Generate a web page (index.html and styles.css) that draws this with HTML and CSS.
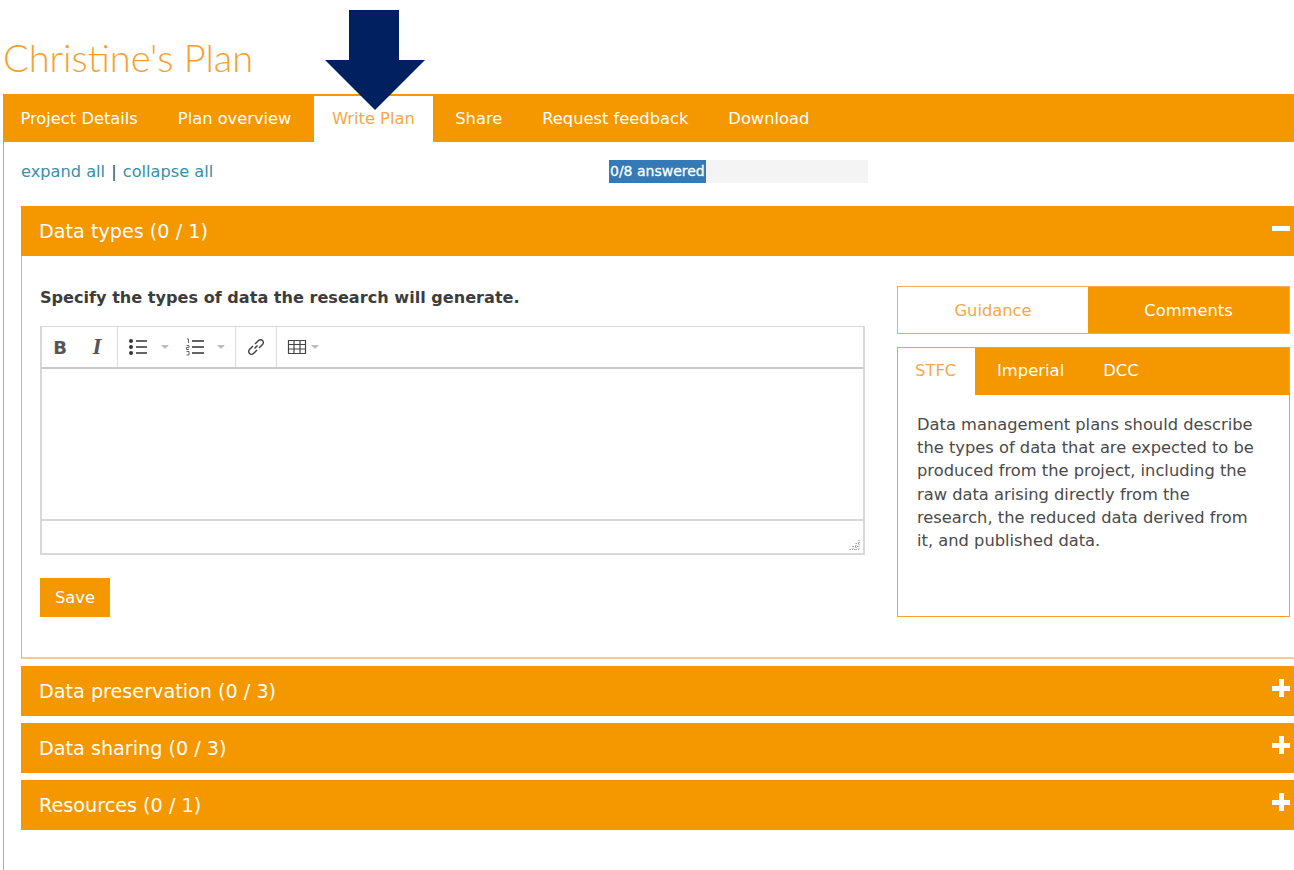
FILE: index.html
```html
<!DOCTYPE html>
<html lang="en">
<head>
    <meta charset="UTF-8">
    <meta name="viewport" content="width=device-width, initial-scale=1.0">
    <title>Christine's Plan</title>
    <link rel="stylesheet" href="styles.css">
</head>
<body>
    <svg class="pointer-arrow" width="100" height="100" viewBox="0 0 100 100">
        <polygon points="24,0 74,0 74,50 100,50 50,100 0,50 24,50" fill="#002060"/>
    </svg>

    <h1 class="plan-title">Christine's Plan</h1>

    <div class="main-tabs">
        <a class="main-tab">Project Details</a>
        <a class="main-tab">Plan overview</a>
        <a class="main-tab active">Write Plan</a>
        <a class="main-tab">Share</a>
        <a class="main-tab">Request feedback</a>
        <a class="main-tab">Download</a>
    </div>

    <div class="tab-content">
        <div class="plan-controls">
            <div class="expand-links"><a>expand all</a> | <a>collapse all</a></div>
            <div class="progress">
                <div class="progress-bar">0/8 answered</div>
            </div>
        </div>

        <div class="section-head">
            <span>Data types (0 / 1)</span>
            <span class="toggle minus"></span>
        </div>
        <div class="section-body">
            <div class="question">
                <h4>Specify the types of data the research will generate.</h4>
                <div class="editor">
                    <div class="toolbar">
                        <div class="tool-group format">
                            <span class="tool tool-b">B</span>
                            <span class="tool tool-i">I</span>
                        </div>
                        <div class="tool-group lists">
                            <svg width="20" height="18" viewBox="0 0 20 18">
                                <circle cx="3" cy="3" r="2" fill="#333"/><circle cx="3" cy="9" r="2" fill="#333"/><circle cx="3" cy="15" r="2" fill="#333"/>
                                <path d="M8 3h11M8 9h11M8 15h11" stroke="#333" stroke-width="1.6"/>
                            </svg>
                            <span class="caret"></span>
                            <svg width="18" height="18" viewBox="0 0 18 18">
                                <path d="M1 1h1.500v4M0.500 7.500h2.500v2h-2.500v2h2.500M0.500 13.500h2.500v3.500h-2.500" fill="none" stroke="#555" stroke-width="0.9"/>
                                <path d="M6 3h12M6 9h12M6 15h12" stroke="#333" stroke-width="1.6"/>
                            </svg>
                            <span class="caret"></span>
                        </div>
                        <div class="tool-group link">
                            <svg width="20" height="20" viewBox="0 0 20 20">
                                <path d="M8.500 11.500l3-3M7 9l-3.500 3.500a2.800 2.800 0 0 0 4 4L11 13M9 7l3.500-3.500a2.800 2.800 0 0 1 4 4L13 11" fill="none" stroke="#444" stroke-width="1.500"/>
                            </svg>
                        </div>
                        <div class="tool-group table">
                            <svg width="20" height="16" viewBox="0 0 20 16">
                                <path d="M1.500 1.500h17v13h-17zM1.500 5.500h17M1.500 10h17M7 1.500v13M13 1.500v13" fill="none" stroke="#444" stroke-width="1.200"/>
                            </svg>
                            <span class="caret"></span>
                        </div>
                    </div>
                    <div class="edit-area"></div>
                    <div class="status-bar">
                        <svg class="resize-grip" width="12" height="12" viewBox="0 0 12 12">
                            <path d="M10 1v10M7 4v7M4 7v4M1 10v1M1 10.500h10M4 7.500h6M7 4.500h3" stroke="#999" stroke-width="1" stroke-dasharray="1 1" fill="none"/>
                        </svg>
                    </div>
                </div>
                <button class="save-btn">Save</button>
            </div>

            <div class="side-panel">
                <div class="side-switch">
                    <div class="switch-item active">Guidance</div>
                    <div class="switch-item">Comments</div>
                </div>
                <div class="guidance-box">
                    <div class="guidance-tabs">
                        <a class="guidance-tab active">STFC</a>
                        <a class="guidance-tab">Imperial</a>
                        <a class="guidance-tab">DCC</a>
                    </div>
                    <p class="guidance-text">Data management plans should describe the types of data that are expected to be produced from the project, including the raw data arising directly from the research, the reduced data derived from it, and published data.</p>
                </div>
            </div>
        </div>

        <div class="section-head closed">
            <span>Data preservation (0 / 3)</span>
            <span class="toggle plus"></span>
        </div>
        <div class="section-head closed">
            <span>Data sharing (0 / 3)</span>
            <span class="toggle plus"></span>
        </div>
        <div class="section-head closed">
            <span>Resources (0 / 1)</span>
            <span class="toggle plus"></span>
        </div>
    </div>
</body>
</html>
```

FILE: styles.css
```css
body {
    margin: 0;
    padding: 0;
    background: #fff;
    color: #444;
    font-family: "DejaVu Sans", Verdana, sans-serif;
    font-size: 16px;
    overflow: hidden;
}

.pointer-arrow {
    position: absolute;
    top: 10px;
    left: 325px;
    z-index: 10;
}

.plan-title {
    margin: 0;
    padding: 33px 0 13px 3px;
    height: 48px;
    line-height: 48px;
    font-family: Lato, sans-serif;
    font-weight: 300;
    font-size: 38px;
    color: #f7a030;
}

.main-tabs {
    display: flex;
    height: 48px;
    margin-left: 3px;
    background: #f59800;
}

.main-tab {
    padding: 0 20px;
    line-height: 49px;
    font-size: 16.3px;
    color: #fff;
}

.main-tab:first-child {
    padding-left: 17.5px;
}

.main-tab.active {
    margin: 0 2.5px;
    padding: 0 18px;
    background: #fff;
    color: #f7a64a;
    border-top: 2px solid #f59800;
    line-height: 45px;
}

.tab-content {
    margin-left: 3px;
    padding: 0 0 0 17px;
    border-left: 1px solid #f7a030;
    height: 728px;
}

.plan-controls {
    display: flex;
    height: 64px;
    padding-top: 18px;
    box-sizing: border-box;
}

.expand-links {
    width: 588px;
    line-height: 23px;
    font-size: 16.2px;
}

.expand-links a {
    color: #3a8ea8;
}

.expand-links a:first-child {
    margin-right: 1px;
}

.expand-links a:last-child {
    margin-left: 1px;
}

.progress {
    width: 259px;
    height: 23px;
    background: #f4f4f4;
}

.progress-bar {
    width: 97px;
    height: 23px;
    padding-left: 1px;
    box-sizing: border-box;
    line-height: 23px;
    background: #337ab7;
    color: #fff;
    font-size: 14px;
    -webkit-text-stroke: 0.3px #fff;
    white-space: nowrap;
}

.section-head {
    display: flex;
    align-items: center;
    justify-content: space-between;
    height: 50px;
    padding: 0 4px 0 18px;
    background: #f59800;
    color: #fff;
    font-size: 19.2px;
}

.section-head.closed {
    margin-bottom: 7px;
}

.toggle {
    position: relative;
    width: 18px;
    height: 18px;
    margin-bottom: 6px;
}

.toggle::before,
.plus::after {
    content: "";
    position: absolute;
    background: #fff;
    left: 0;
    top: 7px;
    width: 18px;
    height: 5px;
}

.plus::after {
    left: 7px;
    top: 0;
    width: 5px;
    height: 18px;
}

.section-body {
    display: flex;
    justify-content: space-between;
    height: 403px;
    margin-bottom: 7px;
    padding: 30px 4px 0 18px;
    box-sizing: border-box;
    border-left: 1px solid #f9a94e;
    border-bottom: 2px solid #fbc88e;
}

.question {
    width: 825px;
}

.question h4 {
    margin: 0 0 17px;
    line-height: 23px;
    font-size: 16.1px;
    font-weight: 700;
    color: #3c3c3c;
}

.editor {
    border: 2px solid #d8d8d8;
    border-top-width: 1px;
    height: 229px;
    box-sizing: border-box;
    display: flex;
    flex-direction: column;
}

.toolbar {
    display: flex;
    height: 42px;
    box-sizing: border-box;
    border-bottom: 2px solid #c9c9c9;
    flex-shrink: 0;
}

.tool-group {
    display: flex;
    align-items: center;
    box-sizing: border-box;
    border-right: 1px solid #ddd;
    padding-left: 10px;
}

.tool-group svg {
    flex-shrink: 0;
}

.tool-group.format {
    width: 76px;
    padding-left: 8px;
    gap: 17px;
}

.tool-group.lists {
    width: 118px;
}

.tool-group.link {
    width: 41px;
}

.tool-group.table {
    border-right: none;
}

.tool {
    width: 20px;
    text-align: center;
    font-size: 18px;
    color: #555;
}

.tool-b {
    font-weight: 700;
}

.tool-i {
    font-family: "Liberation Serif", serif;
    font-style: italic;
    font-size: 23px;
    font-weight: 700;
}

.caret {
    margin: 0 17px 0 13px;
    border-left: 4px solid transparent;
    border-right: 4px solid transparent;
    border-top: 4px solid #bbb;
}

.caret:last-child {
    margin-right: 0;
}

.tool-group.table .caret {
    margin: 0 0 0 4px;
}

.edit-area {
    flex: 1;
}

.status-bar {
    display: flex;
    justify-content: flex-end;
    align-items: flex-end;
    height: 34px;
    padding: 0 2px 2px 0;
    box-sizing: border-box;
    border-top: 2px solid #d8d8d8;
}

.save-btn {
    display: block;
    width: 70px;
    height: 39px;
    margin-top: 23px;
    border: none;
    background: #f59800;
    color: #fff;
    font-family: inherit;
    font-size: 16.3px;
}

.side-panel {
    width: 393px;
}

.side-switch {
    display: flex;
    height: 48px;
    border: 1px solid #f9a94e;
    box-sizing: border-box;
}

.switch-item {
    flex: 1;
    line-height: 47px;
    text-align: center;
    font-size: 16.3px;
    background: #f59800;
    color: #fff;
}

.switch-item.active {
    flex: none;
    width: 190px;
    background: #fff;
    color: #f7a64a;
}

.guidance-box {
    height: 270px;
    margin-top: 13px;
    box-sizing: border-box;
    border: 1px solid #f7a030;
}

.guidance-tabs {
    display: flex;
    height: 47px;
    background: #f59800;
}

.guidance-tab {
    padding: 0 19.5px;
    line-height: 46px;
    font-size: 16.4px;
    color: #fff;
}

.guidance-tab.active {
    width: 77px;
    margin-right: 2.5px;
    padding: 0 0 0 17px;
    box-sizing: border-box;
    background: #fff;
    color: #f7a64a;
}

.guidance-text {
    margin: 18px 30px 0 19px;
    line-height: 23.2px;
    font-size: 16.3px;
    color: #4a4a4a;
}
```
